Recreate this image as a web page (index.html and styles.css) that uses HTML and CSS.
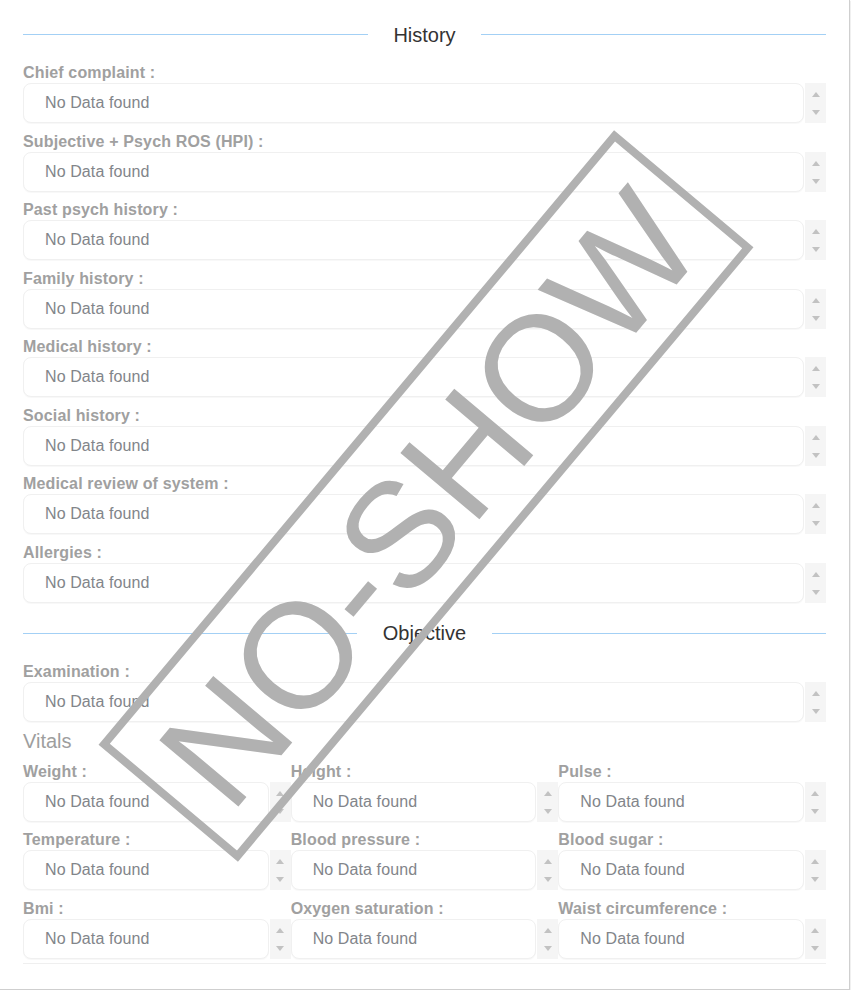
FILE: index.html
```html
<!DOCTYPE html>
<html lang="en">
<head>
<meta charset="utf-8">
<title>History</title>
<link rel="stylesheet" href="styles.css">
</head>
<body>
<div class="page">
  <div class="section-title"><span class="rule"></span><span class="title">History</span><span class="rule"></span></div>

  <div class="field"><div class="label">Chief complaint :</div><div class="input-row"><div class="box">No Data found</div><div class="spin"><span class="up"></span><span class="down"></span></div></div></div>
  <div class="field"><div class="label">Subjective + Psych ROS (HPI) :</div><div class="input-row"><div class="box">No Data found</div><div class="spin"><span class="up"></span><span class="down"></span></div></div></div>
  <div class="field"><div class="label">Past psych history :</div><div class="input-row"><div class="box">No Data found</div><div class="spin"><span class="up"></span><span class="down"></span></div></div></div>
  <div class="field"><div class="label">Family history :</div><div class="input-row"><div class="box">No Data found</div><div class="spin"><span class="up"></span><span class="down"></span></div></div></div>
  <div class="field"><div class="label">Medical history :</div><div class="input-row"><div class="box">No Data found</div><div class="spin"><span class="up"></span><span class="down"></span></div></div></div>
  <div class="field"><div class="label">Social history :</div><div class="input-row"><div class="box">No Data found</div><div class="spin"><span class="up"></span><span class="down"></span></div></div></div>
  <div class="field"><div class="label">Medical review of system :</div><div class="input-row"><div class="box">No Data found</div><div class="spin"><span class="up"></span><span class="down"></span></div></div></div>
  <div class="field"><div class="label">Allergies :</div><div class="input-row"><div class="box">No Data found</div><div class="spin"><span class="up"></span><span class="down"></span></div></div></div>

  <div class="section-title objective"><span class="rule"></span><span class="title">Objective</span><span class="rule"></span></div>

  <div class="field exam"><div class="label">Examination :</div><div class="input-row"><div class="box">No Data found</div><div class="spin"><span class="up"></span><span class="down"></span></div></div></div>

  <div class="vitals-title">Vitals</div>

  <div class="vitals-grid">
    <div class="field"><div class="label">Weight :</div><div class="input-row"><div class="box">No Data found</div><div class="spin"><span class="up"></span><span class="down"></span></div></div></div>
    <div class="field"><div class="label">Height :</div><div class="input-row"><div class="box">No Data found</div><div class="spin"><span class="up"></span><span class="down"></span></div></div></div>
    <div class="field"><div class="label">Pulse :</div><div class="input-row"><div class="box">No Data found</div><div class="spin"><span class="up"></span><span class="down"></span></div></div></div>
    <div class="field"><div class="label">Temperature :</div><div class="input-row"><div class="box">No Data found</div><div class="spin"><span class="up"></span><span class="down"></span></div></div></div>
    <div class="field"><div class="label">Blood pressure :</div><div class="input-row"><div class="box">No Data found</div><div class="spin"><span class="up"></span><span class="down"></span></div></div></div>
    <div class="field"><div class="label">Blood sugar :</div><div class="input-row"><div class="box">No Data found</div><div class="spin"><span class="up"></span><span class="down"></span></div></div></div>
    <div class="field"><div class="label">Bmi :</div><div class="input-row"><div class="box">No Data found</div><div class="spin"><span class="up"></span><span class="down"></span></div></div></div>
    <div class="field"><div class="label">Oxygen saturation :</div><div class="input-row"><div class="box">No Data found</div><div class="spin"><span class="up"></span><span class="down"></span></div></div></div>
    <div class="field"><div class="label">Waist circumference :</div><div class="input-row"><div class="box">No Data found</div><div class="spin"><span class="up"></span><span class="down"></span></div></div></div>
  </div>

  <div class="bottom-rule"></div>

  <div class="watermark"><span class="watermark-text">NO-SHOW</span></div>
</div>
</body>
</html>
```

FILE: styles.css
```css
html, body {
  margin: 0;
  padding: 0;
  background: #ffffff;
}

body {
  font-family: "Liberation Sans", Arial, sans-serif;
}

.page {
  position: relative;
  box-sizing: border-box;
  width: 850px;
  height: 990px;
  padding: 14.5px 23px 0 23px;
  border-right: 1px solid #cfcfcf;
  border-bottom: 1px solid #cfcfcf;
  box-shadow: 1px 1px 1px rgba(0, 0, 0, 0.06);
  overflow: hidden;
}

.section-title {
  display: flex;
  align-items: center;
  height: 40px;
}

.section-title .rule {
  flex: 1;
  height: 1px;
  background: #a3d0f5;
}

.section-title .title {
  padding: 0 25px;
  font-size: 20px;
  color: #333333;
  line-height: 24px;
}

.objective {
  margin-top: 10.5px;
}

.objective .title {
  padding: 0 26px;
}

.field {
  margin-top: 8.5px;
}

.exam {
  margin-top: 9px;
}

.label {
  height: 20px;
  line-height: 20px;
  font-size: 16px;
  font-weight: bold;
  color: #a0a0a0;
  letter-spacing: 0.15px;
  white-space: nowrap;
}

.input-row {
  display: flex;
  height: 40px;
}

.box {
  flex: 1;
  box-sizing: border-box;
  height: 40px;
  border: 1px solid #f0f0f0;
  border-radius: 8px;
  box-shadow: 0 1px 1px rgba(0, 0, 0, 0.03);
  padding-left: 21px;
  line-height: 38px;
  font-size: 16px;
  color: #82858a;
  letter-spacing: 0.1px;
  white-space: nowrap;
  background: #ffffff;
}

.spin {
  width: 21px;
  margin-left: 1px;
  background: #f5f5f5;
  display: flex;
  flex-direction: column;
  align-items: center;
  padding-top: 9px;
  box-sizing: border-box;
  gap: 13px;
}

.spin .up {
  width: 0;
  height: 0;
  border-left: 4.5px solid transparent;
  border-right: 4.5px solid transparent;
  border-bottom: 5px solid #c2c2c2;
}

.spin .down {
  width: 0;
  height: 0;
  border-left: 4.5px solid transparent;
  border-right: 4.5px solid transparent;
  border-top: 5px solid #c2c2c2;
}

.vitals-title {
  margin-top: 7px;
  height: 24px;
  line-height: 24px;
  font-size: 20px;
  color: #9e9e9e;
}

.vitals-grid {
  display: grid;
  grid-template-columns: 1fr 1fr 1fr;
}

.bottom-rule {
  margin-top: 4.5px;
  height: 1px;
  background: #efefef;
}

.watermark {
  position: absolute;
  left: 426px;
  top: 495.5px;
  width: 802px;
  height: 182px;
  box-sizing: border-box;
  border: 8px solid #b1b1b1;
  transform: translate(-50%, -50%) rotate(-50deg);
  display: flex;
  align-items: center;
  justify-content: center;
  pointer-events: none;
}

.watermark-text {
  font-family: "Liberation Sans", Arial, sans-serif;
  font-size: 150px;
  line-height: 1;
  color: #b1b1b1;
  white-space: nowrap;
  position: relative;
  top: 4px;
}
```
